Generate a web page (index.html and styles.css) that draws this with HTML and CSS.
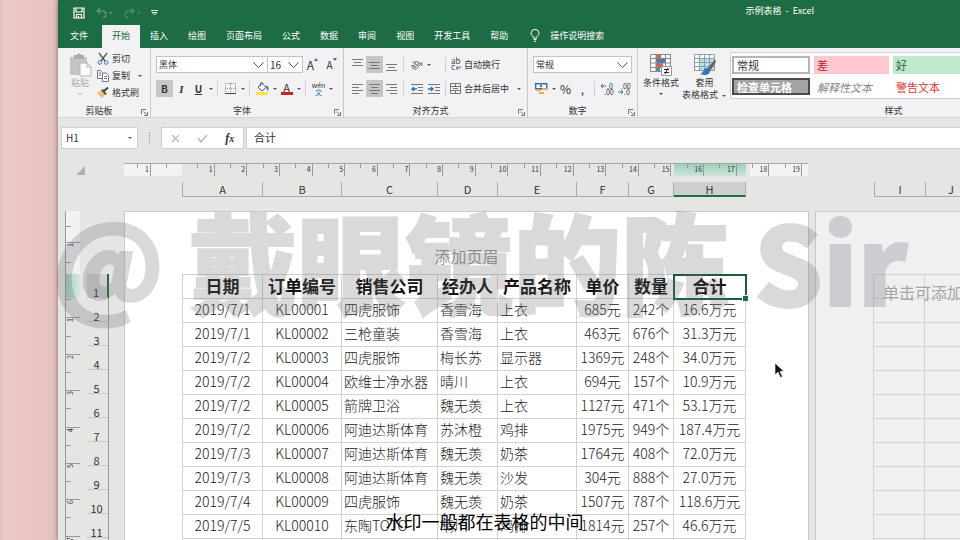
FILE: index.html
```html
<!DOCTYPE html>
<html lang="zh-CN">
<head>
	<meta charset="utf-8">
	<title>示例表格 - Excel</title>
	<link rel="stylesheet" href="styles.css">
</head>

<body>

	<div class="app">
		<header class="titlebar">
			<div class="quick">
				<button aria-label="保存"><svg width="12" height="12" viewBox="0 0 12 12"><path d="M1 1h10v10H1zM3 1v4h6V1M3.500 11V7.500h5V11M5.500 9v2" fill="none" stroke="#fff" stroke-width="1.200"/></svg></button>
				<button aria-label="撤消"><svg width="18" height="12" viewBox="0 0 18 12"><path d="M5 1L2 4l3 3M2 4h5c5 0 5 6 1 7" fill="none" stroke="#5f9678" stroke-width="1.300"/><path d="M14 5h4l-2 2z" fill="#5f9678"/></svg></button>
				<button aria-label="恢复"><svg width="18" height="12" viewBox="0 0 18 12"><path d="M8 1l3 3-3 3M11 4H6C1 4 1 10 5 11" fill="none" stroke="#4a8a67" stroke-width="1.300"/><path d="M14 5h4l-2 2z" fill="#4a8a67"/></svg></button>
				<button aria-label="自定义"><svg width="7" height="6" viewBox="0 0 7 6"><path d="M0 .5h7M1 2.500l2.500 2.500L6 2.500z" fill="none" stroke="#e4efe8"/></svg></button>
			</div>
			<div class="doc-name">示例表格&nbsp; -&nbsp; Excel</div>
		</header>
		<nav class="tabs">
			<button class="tab file">文件</button>
			<button class="tab active">开始</button>
			<button class="tab">插入</button>
			<button class="tab">绘图</button>
			<button class="tab">页面布局</button>
			<button class="tab">公式</button>
			<button class="tab">数据</button>
			<button class="tab">审阅</button>
			<button class="tab">视图</button>
			<button class="tab">开发工具</button>
			<button class="tab">帮助</button>
			<button class="tab tell"><svg width="10" height="13" viewBox="0 0 10 13"><path d="M3.500 9C3.500 7 1 6.500 1 4.200a4 3.800 0 0 1 8 0C9 6.500 6.500 7 6.500 9zM3.500 10.500h3M4 12.300h2" fill="none" stroke="#fff"/></svg>操作说明搜索</button>
		</nav>

		<div class="ribbon">
			<section class="group clip">
				<div class="tools">
					<button class="big off">
						<svg width="24" height="24" viewBox="0 0 24 24"><path d="M2 4h17v18H2z" fill="#c4c4c4"/><path d="M6 2h3c0-2 4-2 4 0h3v4H6z" fill="#aaa"/><path d="M12 10h7l4 4v9H12z" fill="#fafafa" stroke="#b5b5b5"/><path d="M19 10v4h4" fill="none" stroke="#b5b5b5"/></svg>
						<span>粘贴</span>
						<i class="caret"></i>
					</button>
					<div class="stack">
						<button class="line"><svg width="12" height="12" viewBox="0 0 12 12"><path d="M2 0l6 8M10 0L4 8" stroke="#555" stroke-width="1.300"/><circle cx="2.800" cy="9.500" r="1.800" fill="none" stroke="#3d76ad"/><circle cx="9.200" cy="9.500" r="1.800" fill="none" stroke="#3d76ad"/></svg>剪切</button>
						<button class="line"><svg width="12" height="12" viewBox="0 0 12 12"><path d="M5 8.500H.5v-8h3l2 2M2 3h2M2 5h2" fill="none" stroke="#777"/><path d="M5.500 3h3.500l2.500 2.500v6h-6zM7 6.500h3M7 8.500h3" fill="#fff" stroke="#777"/></svg>复制<i class="caret far"></i></button>
						<button class="line"><svg width="12" height="12" viewBox="0 0 12 12"><path d="M0 6l4-3 4 5-3 3z" fill="#f0c070"/><path d="M4 3l2-1 4 5-2 1z" fill="#555"/><path d="M7 4l4-3.500" stroke="#444" stroke-width="2"/></svg>格式刷</button>
					</div>
				</div>
				<div class="label">剪贴板</div>
				<svg class="corner" width="7" height="7" viewBox="0 0 7 7"><path d="M.5 5V.5H5M2.500 2.500l3 3M6.500 3v3.500H3" fill="none" stroke="#777"/></svg>
			</section>

			<section class="group font">
				<div class="row">
					<label class="pick wide"><select aria-label="字体"><option>黑体</option></select><svg width="11" height="6" viewBox="0 0 11 6"><path d="M.5.5l5 5 5-5" fill="none" stroke="#555"/></svg></label>
					<label class="pick narrow"><select aria-label="字号"><option>16</option></select><svg width="11" height="6" viewBox="0 0 11 6"><path d="M.5.5l5 5 5-5" fill="none" stroke="#555"/></svg></label>
					<button class="tool grow" aria-label="增大字号">A<svg width="4" height="3" viewBox="0 0 4 3"><path d="M0 3l2-3 2 3z" fill="#3b6ea5"/></svg></button>
					<button class="tool grow small" aria-label="减小字号">A<svg width="4" height="3" viewBox="0 0 4 3"><path d="M0 0h4L2 3z" fill="#3b6ea5"/></svg></button>
				</div>
				<div class="row">
					<button class="tool on"><b>B</b></button>
					<button class="tool serif"><em>I</em></button>
					<button class="tool"><u>U</u></button>
					<i class="caret"></i><i class="sep"></i>
					<button class="tool" aria-label="边框"><svg width="11" height="11" viewBox="0 0 11 11"><path d="M.5 0v10M5.500 0v10M10.500 0v10M0 .5h11M0 5.500h11" stroke="#999" stroke-dasharray="1 1"/><path d="M0 10.500h11" stroke="#444"/></svg></button>
					<i class="caret"></i><i class="sep"></i>
					<button class="tool" aria-label="填充颜色"><svg width="13" height="13" viewBox="0 0 13 13"><path d="M0 10h12v3H0z" fill="#ffe23a"/><path d="M2 5l4-3.500 4 4-4 3.500z" fill="#fff" stroke="#555"/><path d="M4.500 4V1.500C4.500 0 7 0 7 2" fill="none" stroke="#555"/><path d="M10 4c2 1 2 3 1.500 4.500" fill="none" stroke="#3b76b5" stroke-width="1.500"/></svg></button>
					<i class="caret"></i>
					<button class="tool colour" aria-label="字体颜色"><span>A</span></button>
					<i class="caret"></i><i class="sep"></i>
					<button class="tool pinyin" aria-label="拼音"><span>wén</span><span>文</span></button>
					<i class="caret"></i>
				</div>
				<div class="label">字体</div>
				<svg class="corner" width="7" height="7" viewBox="0 0 7 7"><path d="M.5 5V.5H5M2.500 2.500l3 3M6.500 3v3.500H3" fill="none" stroke="#777"/></svg>
			</section>

			<section class="group align">
				<div class="align-grid">
					<div class="row">
						<button class="tool" aria-label="顶端对齐"><svg width="11" height="12" viewBox="0 0 11 12"><path d="M0 .5h11M2 3.500h7M0 6.500h11" stroke="#777"/></svg></button>
						<button class="tool on" aria-label="垂直居中"><svg width="11" height="12" viewBox="0 0 11 12"><path d="M0 3.500h11M2 6.500h7M0 9.500h11" stroke="#777"/></svg></button>
						<button class="tool" aria-label="底端对齐"><svg width="11" height="12" viewBox="0 0 11 12"><path d="M0 5.500h11M2 8.500h7M0 11.500h11" stroke="#777"/></svg></button>
					</div>
					<i class="sep"></i>
					<div class="row">
						<button class="tool" aria-label="方向"><svg width="13" height="12" viewBox="0 0 13 12"><path d="M5 11l7-7M12 7V4H9" fill="none" stroke="#777"/><text x="0" y="9" font-size="8" transform="rotate(-45 4 6)" fill="#444">ab</text></svg></button>
						<i class="caret"></i>
					</div>
					<i class="sep"></i>
					<button class="line"><svg width="11" height="13" viewBox="0 0 11 13"><text x="1" y="6" font-size="8" fill="#444">ab</text><text x="1" y="12" font-size="8" fill="#444">c</text><path d="M10 8v2H7M8 8l-2 2 2 2" fill="none" stroke="#3b76b5"/></svg>自动换行</button>

					<div class="row">
						<button class="tool" aria-label="左对齐"><svg width="11" height="10" viewBox="0 0 11 10"><path d="M0 .5h11M0 3.500h7M0 6.500h11M0 9.500h7" stroke="#777"/></svg></button>
						<button class="tool on" aria-label="居中"><svg width="11" height="10" viewBox="0 0 11 10"><path d="M0 .5h11M2 3.500h7M0 6.500h11M2 9.500h7" stroke="#777"/></svg></button>
						<button class="tool" aria-label="右对齐"><svg width="11" height="10" viewBox="0 0 11 10"><path d="M0 .5h11M4 3.500h7M0 6.500h11M4 9.500h7" stroke="#777"/></svg></button>
					</div>
					<i class="sep"></i>
					<div class="row">
						<button class="tool" aria-label="减少缩进"><svg width="12" height="10" viewBox="0 0 12 10"><path d="M0 .5h12M7 3.500h5M7 6.500h5M0 9.500h12" stroke="#777"/><path d="M6 5H1M3 3L1 5l2 2" fill="none" stroke="#2f6fae" stroke-width="1.300"/></svg></button>
						<button class="tool" aria-label="增加缩进"><svg width="12" height="10" viewBox="0 0 12 10"><path d="M0 .5h12M7 3.500h5M7 6.500h5M0 9.500h12" stroke="#777"/><path d="M0 5h5M3 3l2 2-2 2" fill="none" stroke="#2f6fae" stroke-width="1.300"/></svg></button>
					</div>
					<i class="sep"></i>
					<button class="line"><svg width="11" height="11" viewBox="0 0 11 11"><path d="M.5.5h10v10H.5zM0 3.500h11M0 7.500h11M5.500 0v3.500M5.500 7.500V11M3 5.500h5" fill="none" stroke="#777"/></svg>合并后居中<i class="caret far"></i></button>
				</div>
				<div class="label">对齐方式</div>
				<svg class="corner" width="7" height="7" viewBox="0 0 7 7"><path d="M.5 5V.5H5M2.500 2.500l3 3M6.500 3v3.500H3" fill="none" stroke="#777"/></svg>
			</section>

			<section class="group number">
				<div class="row">
					<label class="pick"><select aria-label="数字格式"><option>常规</option></select><svg width="11" height="6" viewBox="0 0 11 6"><path d="M.5.5l5 5 5-5" fill="none" stroke="#555"/></svg></label>
				</div>
				<div class="row">
					<button class="tool" aria-label="会计数字格式"><svg width="13" height="12" viewBox="0 0 13 12"><path d="M.7.7h11v5H.7z" fill="#fff" stroke="#2f6fae" stroke-width="1.400"/><circle cx="6" cy="3" r="1.200" fill="#2f6fae"/><path d="M1 6h5v2H1zM7 5h5v2H7zM4 9h5v2H4z" fill="#e9a948"/></svg></button>
					<i class="caret"></i>
					<button class="tool percent">%</button>
					<button class="tool percent">,</button>
					<i class="sep"></i>
					<button class="tool" aria-label="增加小数位数"><svg width="13" height="12" viewBox="0 0 13 12"><path d="M5 3H0M2 1L0 3l2 2" fill="none" stroke="#2f6fae"/><text x="6" y="6" font-size="7" fill="#333">.0</text><text x="3" y="12" font-size="7" fill="#333">.00</text></svg></button>
					<button class="tool" aria-label="减少小数位数"><svg width="13" height="12" viewBox="0 0 13 12"><text x="3" y="6" font-size="7" fill="#333">.00</text><path d="M0 9h5M3 7l2 2-2 2" fill="none" stroke="#2f6fae"/><text x="6" y="12" font-size="7" fill="#333">.0</text></svg></button>
				</div>
				<div class="label">数字</div>
				<svg class="corner" width="7" height="7" viewBox="0 0 7 7"><path d="M.5 5V.5H5M2.500 2.500l3 3M6.500 3v3.500H3" fill="none" stroke="#777"/></svg>
			</section>

			<section class="group styles">
				<div class="tools">
					<button class="big">
						<svg width="24" height="24" viewBox="0 0 24 24"><path d="M1.500 1.500h20v17h-20z" fill="#fff" stroke="#8a8a8a"/><path d="M7 1h5v4H7zM7 10h7v4H7z" fill="#d9604c"/><path d="M7 5h9v5H7z" fill="#4a78b5"/><path d="M7 14h4v4H7z" fill="#3b8fa0"/><path d="M1 5.500h21M1 10H22M1 14.500h21M7 1v18M16.500 1v18" stroke="#8a8a8a" fill="none"/><path d="M12.500 13.500h10v9h-10z" fill="#fff" stroke="#999"/><path d="M15 16.500h5M15 19.500h5M19 15l-3 6" stroke="#222"/></svg>
						<span>条件格式</span>
						<i class="caret"></i>
					</button>
					<button class="big">
						<svg width="24" height="24" viewBox="0 0 24 24"><path d="M1.500 1.500h20v16h-20z" fill="#fff" stroke="#999"/><path d="M7 6h14v11H7z" fill="#b8dcea"/><path d="M1 5.500h21M1 9.500h21M1 13.500h21M6.500 1v17M11.500 1v17M16.500 1v17" stroke="#8fa3ad"/><path d="M22 6l-8 10 3 2 6-9z" fill="#666"/><path d="M14 15c-4 0-3 5-7 6 5 2 10 1 10-3z" fill="#2f78c4"/></svg>
						<span>套用</span>
						<span>表格格式<i class="caret"></i></span>
					</button>
					<div class="gallery">
						<button class="swatch normal">常规</button>
						<button class="swatch bad">差</button>
						<button class="swatch good">好</button>
						<button class="swatch check">检查单元格</button>
						<button class="swatch note">解释性文本</button>
						<button class="swatch warn">警告文本</button>
					</div>
				</div>
				<div class="label">样式</div>
			</section>
		</div>

		<div class="formula">
			<label class="name-box"><input value="H1" aria-label="名称框"><i class="caret"></i></label>
			<i class="dots"></i>
			<div class="fx">
				<button aria-label="取消"><svg width="9" height="9" viewBox="0 0 9 9"><path d="M1 1l7 7M8 1L1 8" stroke="#bbb" stroke-width="1.300"/></svg></button>
				<button aria-label="输入"><svg width="11" height="9" viewBox="0 0 11 9"><path d="M1 4l3 4 6-7" fill="none" stroke="#bbb" stroke-width="1.500"/></svg></button>
				<button class="fn"><em>f<small>x</small></em></button>
			</div>
			<input class="content" value="合计" aria-label="编辑栏">
		</div>

		<main class="sheet">
			<div class="ruler-line">
				<svg class="all" width="9" height="9" viewBox="0 0 9 9"><path d="M9 0v9H0z" fill="#b0b0b0"/></svg>
				<div class="ruler">
					<span>1</span><span class="zero"></span>
					<div class="cm">
						<span>1</span><span>2</span><span>3</span><span>4</span><span>5</span><span>6</span><span>7</span><span>8</span><span>9</span><span>10</span><span>11</span><span>12</span><span>13</span><span>14</span><span>15</span><span>16</span><span>17</span><span>18</span><span>19</span>
					</div>
				</div>
			</div>

			<div class="heads">
				<div class="cols first"><span>A</span><span>B</span><span>C</span><span>D</span><span>E</span><span>F</span><span>G</span><span class="sel">H</span></div>
				<div class="cols second"><span>I</span><span>J</span><span>K</span></div>
			</div>

			<div class="body">
				<div class="vruler">
					<span></span><span>1</span><span class="zero"></span><span>1</span><span>2</span><span>3</span><span>4</span><span>5</span><span>6</span><span>7</span>
				</div>
				<div class="rows">
					<span class="sel">1</span><span>2</span><span>3</span><span>4</span><span>5</span><span>6</span><span>7</span><span>8</span><span>9</span><span>10</span><span>11</span><span>12</span>
				</div>
				<div class="page">
					<div class="page-head">添加页眉</div>
					<table class="data">
						<colgroup><col class="ca"><col class="cb"><col class="cc"><col class="cd"><col class="ce"><col class="cf"><col class="cg"><col class="ch"></colgroup>
						<tr><th>日期</th><th>订单编号</th><th>销售公司</th><th>经办人</th><th>产品名称</th><th>单价</th><th>数量</th><th class="cursor">合计</th></tr>
						<tr><td>2019/7/1</td><td>KL00001</td><td>四虎服饰</td><td>香雪海</td><td>上衣</td><td>685元</td><td>242个</td><td>16.6万元</td></tr>
						<tr><td>2019/7/1</td><td>KL00002</td><td>三枪童装</td><td>香雪海</td><td>上衣</td><td>463元</td><td>676个</td><td>31.3万元</td></tr>
						<tr><td>2019/7/2</td><td>KL00003</td><td>四虎服饰</td><td>梅长苏</td><td>显示器</td><td>1369元</td><td>248个</td><td>34.0万元</td></tr>
						<tr><td>2019/7/2</td><td>KL00004</td><td>欧维士净水器</td><td>晴川</td><td>上衣</td><td>694元</td><td>157个</td><td>10.9万元</td></tr>
						<tr><td>2019/7/2</td><td>KL00005</td><td>箭牌卫浴</td><td>魏无羡</td><td>上衣</td><td>1127元</td><td>471个</td><td>53.1万元</td></tr>
						<tr><td>2019/7/2</td><td>KL00006</td><td>阿迪达斯体育</td><td>苏沐橙</td><td>鸡排</td><td>1975元</td><td>949个</td><td>187.4万元</td></tr>
						<tr><td>2019/7/3</td><td>KL00007</td><td>阿迪达斯体育</td><td>魏无羡</td><td>奶茶</td><td>1764元</td><td>408个</td><td>72.0万元</td></tr>
						<tr><td>2019/7/3</td><td>KL00008</td><td>阿迪达斯体育</td><td>魏无羡</td><td>沙发</td><td>304元</td><td>888个</td><td>27.0万元</td></tr>
						<tr><td>2019/7/4</td><td>KL00009</td><td>四虎服饰</td><td>魏无羡</td><td>奶茶</td><td>1507元</td><td>787个</td><td>118.6万元</td></tr>
						<tr><td>2019/7/5</td><td>KL00010</td><td>东陶TOTO</td><td>晴川</td><td>鸡排</td><td>1814元</td><td>257个</td><td>46.6万元</td></tr>
						<tr><td></td><td></td><td></td><td></td><td></td><td></td><td></td><td></td></tr>
					</table>
				</div>
				<div class="page next">
					<table class="blank">
						<tr><td></td><td></td><td></td></tr>
						<tr><td></td><td></td><td></td></tr>
						<tr><td></td><td></td><td></td></tr>
						<tr><td></td><td></td><td></td></tr>
						<tr><td></td><td></td><td></td></tr>
						<tr><td></td><td></td><td></td></tr>
						<tr><td></td><td></td><td></td></tr>
						<tr><td></td><td></td><td></td></tr>
						<tr><td></td><td></td><td></td></tr>
						<tr><td></td><td></td><td></td></tr>
						<tr><td></td><td></td><td></td></tr>
						<tr><td></td><td></td><td></td></tr>
					</table>
					<div class="hint">单击可添加数据</div>
				</div>
			</div>
		</main>
	</div>

	<div class="watermark">@ 戴眼镜的陈 Sir</div>
	<div class="subtitle">水印一般都在表格的中间</div>
	<svg class="pointer" width="11" height="17" viewBox="0 0 11 17"><path d="M1 1v12l3-3 2.500 5.500 2-1L6 9.500h4z" fill="#111" stroke="#fff" stroke-width=".6"/></svg>

</body>
</html>
```
FILE: styles.css
```css
* {
	box-sizing: border-box;
}
body {
	margin: 0;
	height: 100vh;
	overflow: hidden;
	position: relative;
	padding-left: 58px;
	background: linear-gradient(to right, #e3bfbc, #ebcac7 4px, #e6c2bf 54px);
	font-family: "Noto Sans CJK SC", sans-serif;
	font-size: 9px;
	line-height: 12px;
	color: #333;
}
button, input, select {
	font: inherit;
	color: inherit;
	border: none;
	background: none;
	padding: 0;
	margin: 0;
}
svg {
	display: block;
	flex: none;
	overflow: visible;
}
.app {
	height: 100%;
	overflow: hidden;
	display: flex;
	flex-direction: column;
	background: #e5e5e4;
	box-shadow: 0 0 5px rgba(60,30,30,.6);
}

/* title and tabs */
.titlebar {
	height: 25px;
	flex: none;
	display: flex;
	justify-content: space-between;
	padding: 0 146px 0 15px;
	background: #1d6c43;
	color: #fff;
}
.quick {
	display: flex;
	align-items: center;
	gap: 10px;
}
.doc-name {
	line-height: 22px;
}
.tabs {
	height: 23px;
	flex: none;
	display: flex;
	background: #1d6c43;
	color: #fff;
}
.tab {
	padding: 0 10px 2px;
	white-space: nowrap;
}
.tab.file {
	padding: 0 14px 2px 12px;
}
.tab.active {
	background: #f2f2f4;
	color: #1d6c43;
}
.tell {
	display: flex;
	align-items: center;
	gap: 10px;
	padding-left: 12px;
}

/* ribbon */
.ribbon {
	height: 70px;
	flex: none;
	display: flex;
	background: #f2f2f4;
	border-bottom: 1px solid #d6d6d6;
}
.group {
	position: relative;
	flex: none;
	display: flex;
	flex-direction: column;
	gap: 7px;
	padding: 8px 5px 0;
	border-right: 1px solid #c9c9c9;
}
.clip { width: 93px; }
.font { width: 193px; }
.align { width: 184px; }
.number { width: 110px; }
.styles { width: 512px; }
.label {
	position: absolute;
	bottom: 0;
	left: 0;
	right: 10px;
	line-height: 13px;
	text-align: center;
}
.corner {
	position: absolute;
	right: 2px;
	bottom: 1px;
}
.tools, .row {
	display: flex;
	align-items: center;
}
.tools {
	align-items: flex-start;
	margin-top: -3px;
}
.big {
	display: flex;
	flex-direction: column;
	align-items: center;
	white-space: nowrap;
}
.big .caret {
	margin-top: 4px;
}
.big span .caret {
	margin: 0 0 0 2px;
}
.off {
	color: #aaa;
}
.clip .big {
	width: 34px;
}
.stack {
	display: flex;
	flex-direction: column;
	gap: 5px;
}
.line {
	display: flex;
	align-items: center;
	gap: 3px;
	white-space: nowrap;
}
.caret {
	display: inline-flex;
	flex: none;
	width: 7px;
	justify-content: center;
	vertical-align: middle;
}
.caret::after {
	content: "";
	border: 2px solid transparent;
	border-top-color: #555;
	border-bottom: none;
}
.off .caret::after {
	border-top-color: #bbb;
}
.far {
	margin-left: 3px;
}
.sep {
	flex: none;
	width: 1px;
	height: 15px;
	margin: 0 4px 0 3px;
	background: #d0d0d0;
}
.tool {
	flex: none;
	width: 17px;
	height: 17px;
	display: flex;
	align-items: center;
	justify-content: center;
}
.tool.on {
	background: #c6c6c6;
}
.tool b, .tool u {
	font-size: 10px;
	font-weight: bold;
}
.serif {
	font-family: "Liberation Serif", serif;
	font-size: 11px;
	font-weight: bold;
}
.pick {
	position: relative;
	flex: 1;
	display: flex;
	border: 1px solid #c4c4c4;
	background: #fff;
}
.pick select {
	appearance: none;
	width: 100%;
	height: 15px;
	padding-left: 2px;
}
.pick svg {
	position: absolute;
	right: 3px;
	top: 5px;
}
.wide {
	flex: 0 0 112px;
}
.narrow {
	flex: 0 0 36px;
	margin-left: -1px;
	font-size: 10px;
}
.grow {
	width: 19px;
	font-size: 12px;
}
.grow svg {
	align-self: flex-start;
	margin-top: 2px;
}
.grow.small {
	font-size: 10px;
}
.colour span {
	width: 12px;
	border-bottom: 3px solid #d42020;
	font-size: 11px;
	line-height: 10px;
}
.pinyin {
	flex-direction: column;
	font-size: 7px;
	line-height: 7px;
}
.pinyin span:last-child {
	color: #2f6fae;
}
.align-grid {
	display: grid;
	grid-template-columns: 51px 8px 34px 8px auto;
	row-gap: 7px;
	align-items: center;
}
.percent {
	font-size: 12px;
}
.styles .tools {
	gap: 3px;
}
.styles .label {
	right: 0;
}
.gallery {
	flex: 1;
	display: grid;
	grid-template-columns: 78px 75px 75px;
	grid-template-rows: 18px 17px;
	gap: 4px;
	margin-top: -1px;
	padding: 3px 1px;
	border: 1px solid #d0d0d0;
	background: #fff;
	font-size: 11px;
}
.swatch {
	padding: 0 3px;
	text-align: left;
}
.normal {
	border: 2px solid #b5b5b5;
}
.bad {
	background: #ffc7ce;
	color: #b5232b;
}
.good {
	background: #c0e8cd;
	color: #256b35;
}
.check {
	border: 2px solid #4a4a4a;
	background: #a3a3a3;
	color: #fff;
	font-weight: bold;
}
.note {
	color: #888;
	font-style: italic;
}
.warn {
	color: #e0342b;
}

/* formula bar */
.formula {
	flex: none;
	display: flex;
	align-items: stretch;
	height: 31px;
	padding: 9px 0 0 3px;
}
.name-box {
	width: 77px;
	display: flex;
	align-items: center;
	padding: 0 4px;
	border: 1px solid #cfcfcf;
	background: #fff;
	font-size: 10px;
}
.name-box input {
	flex: 1;
	min-width: 0;
}
.dots {
	width: 1px;
	margin: 5px 11px;
	border-left: 1px dotted #999;
}
.fx {
	width: 83px;
	display: flex;
	align-items: center;
	justify-content: space-around;
	border: 1px solid #cfcfcf;
	background: #fff;
}
.fn {
	font-family: "Liberation Serif", serif;
	font-size: 12px;
	font-weight: bold;
}
.content {
	flex: 1;
	min-width: 0;
	margin-left: 2px;
	padding: 0 7px 3px;
	border: 1px solid #cfcfcf;
	border-right: none;
	background: #fff;
	font-size: 11px;
}

/* sheet */
.sheet {
	flex: 1;
	min-height: 0;
	padding-top: 14px;
	overflow: hidden;
}
.ruler-line {
	display: flex;
	height: 19px;
	padding-left: 18px;
}
.all {
	margin: 3px 39px 0 0;
}
.ruler {
	width: 684px;
	height: 13px;
	display: flex;
	flex: none;
	border-top: 1px solid #a5a5a5;
	background:
		linear-gradient(#9fd0bb, #cfe6dc) 550px 0 / 72px 13px no-repeat,
		linear-gradient(#f3f3f6, #f3f3f6) 0 0 / 58px 13px no-repeat,
		linear-gradient(#f3f3f6, #f3f3f6) 626px 0 / 58px 13px no-repeat;
	font-size: 7px;
	line-height: 11px;
	text-align: right;
}
.ruler span {
	padding-right: 1px;
	border-right: 1px solid #999;
	background: linear-gradient(#999, #999) 50% 0 / 1px 4px no-repeat;
}
.ruler > span {
	width: 27px;
}
.ruler > .zero {
	width: 31px;
	border: none;
}
.cm {
	width: 620px;
	display: grid;
	grid-template-columns: repeat(19, 1fr);
}
.heads {
	display: flex;
	height: 29px;
	padding-left: 124px;
	font-size: 11px;
	text-align: center;
}
.cols {
	flex: none;
	display: grid;
	height: 15px;
	line-height: 15px;
	border-left: 1px solid #ababab;
	border-bottom: 1px solid #ababab;
}
.first {
	grid-template-columns: 80px 79px 96px 60px 79px 52px 45px 72px;
}
.second {
	margin-left: 128px;
	grid-template-columns: 51px 51px 51px;
}
.cols span {
	border-right: 1px solid #ababab;
}
.cols .sel {
	height: 15px;
	background: #cfcfd0;
	border-bottom: 2px solid #1d6c43;
}
.body {
	display: flex;
	padding-left: 7px;
}
.vruler {
	flex: none;
	width: 15px;
	height: 361px;
	display: grid;
	grid-template-rows: 31px 39px repeat(8, 1fr);
	border-left: 1px solid #999;
	background:
		linear-gradient(to right, #9fd0bb, #dcebe4) 0 63px / 15px 24px no-repeat,
		linear-gradient(#f1f1f4, #f1f1f4) 0 0 / 15px 63px no-repeat;
	font-size: 7px;
}
.vruler span {
	writing-mode: sideways-lr;
	border-top: 1px solid #999;
	background: linear-gradient(#999, #999) 0 50% / 5px 1px no-repeat;
	line-height: 8px;
	text-align: right;
}
.vruler .zero, .vruler span:first-child {
	border-top: none;
}
.rows {
	flex: none;
	width: 22px;
	margin: 63px 15px 0 7px;
	border-right: 1px solid #999;
	font-size: 11px;
	text-align: center;
}
.rows span {
	display: block;
	height: 24px;
	padding: 12px 2px 0 0;
	line-height: 12px;
	border-bottom: 1px solid #c6c6c6;
}
.rows .sel {
	margin-right: -1px;
	background: #cfcfd0;
	border-right: 2px solid #1d6c43;
}
.page {
	position: relative;
	flex: none;
	width: 685px;
	padding-left: 57px;
	border: 1px solid #c8c8c8;
	background: #fff;
}
.page-head {
	height: 62px;
	margin-left: -57px;
	padding-top: 33px;
	font-size: 16px;
	line-height: 22px;
	text-align: center;
	color: #999;
}
table {
	table-layout: fixed;
	border-collapse: collapse;
}
.data {
	width: 563px;
}
.ca { width: 80px; }
.cb { width: 79px; }
.cc { width: 96px; }
.cd { width: 60px; }
.ce { width: 79px; }
.cf { width: 52px; }
.cg { width: 45px; }
.ch { width: 72px; }
th, td {
	height: 24px;
	padding: 0 0 3px;
	border: 1px solid #d2d2d4;
	white-space: nowrap;
}
.data td {
	font-size: 14px;
	font-weight: 300;
	line-height: 20px;
	text-align: center;
	color: #222;
}
.data td:nth-child(3), .data td:nth-child(4), .data td:nth-child(5) {
	padding-left: 2px;
	text-align: left;
}
th {
	padding-bottom: 2px;
	font-size: 17px;
	line-height: 20px;
	color: #111;
}
.cursor {
	position: relative;
	outline: 2px solid #1d5b3e;
	outline-offset: -1px;
}
.cursor::after {
	content: "";
	position: absolute;
	right: -3px;
	bottom: -3px;
	width: 5px;
	height: 5px;
	background: #1d6c43;
	border: 1px solid #fff;
	border-width: 1px 0 0 1px;
}
.next {
	width: 300px;
	margin-left: 6px;
	background: #f0f0f3;
}
.blank {
	width: 153px;
	margin-top: 62px;
}
.hint {
	position: absolute;
	left: 67px;
	top: 69px;
	font-size: 16px;
	line-height: 22px;
	color: #a5a5a5;
}

/* things lying over the window */
.watermark {
	position: absolute;
	left: 52px;
	top: 179px;
	font-size: 108px;
	line-height: 160px;
	font-weight: 900;
	white-space: nowrap;
	color: #6e6e72;
	-webkit-text-stroke: 2px #6e6e72;
	opacity: .26;
	pointer-events: none;
}
.subtitle {
	position: absolute;
	left: 0;
	right: 0;
	bottom: 6px;
	padding-left: 9px;
	font-size: 18px;
	line-height: 26px;
	text-align: center;
	color: #000;
}
.pointer {
	position: absolute;
	left: 774px;
	top: 362px;
}
```
